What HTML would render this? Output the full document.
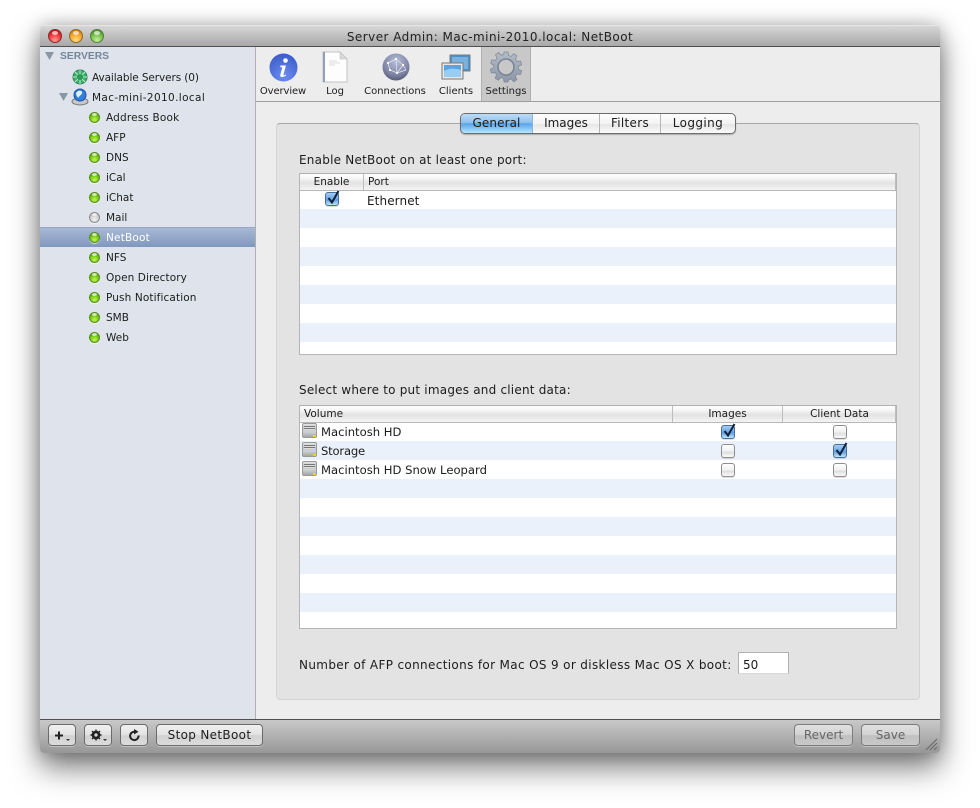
<!DOCTYPE html>
<html><head><meta charset="utf-8"><style>
html,body{margin:0;padding:0;width:980px;height:808px;background:#fff;overflow:hidden}
*{box-sizing:border-box}
div,span,svg{position:absolute}
body{font-family:"DejaVu Sans","Liberation Sans",sans-serif;color:#1c1c1c}
.t{white-space:nowrap;font-size:10.5px;line-height:14px;height:14px}
.m{white-space:nowrap;font-size:12px;line-height:16px;height:16px}
.c{text-align:center}
.led{width:11px;height:11px;left:89px;border-radius:50%;border:1px solid #5d8a22;background:radial-gradient(circle at 50% 75%,#c4f55a 0,#7ed016 45%,#4a9a08 85%);box-shadow:0 1px 0 rgba(255,255,255,.6)}
.led:after{content:"";position:absolute;left:2px;top:0;width:5px;height:3px;border-radius:50%;background:rgba(255,255,255,.7)}
.led.off{border-color:#8a8a8a;background:radial-gradient(circle at 50% 72%,#f2f2f2 0,#d2d2d2 50%,#a8a8a8 90%)}
.tl{width:14px;height:14px;top:29px;border-radius:50%}
.tl:after{content:"";position:absolute;left:3px;top:1px;width:6px;height:4px;border-radius:50%;background:rgba(255,255,255,.65)}
.tbl{border:1px solid #b4b4b4;border-top-color:#b0b0b0;background:repeating-linear-gradient(#ebf1fb -3px,#ebf1fb 16px,#fff 16px,#fff 35px)}
.hd{left:0;top:0;right:0;height:17px;background:linear-gradient(#fff 0,#f4f4f4 30%,#e2e2e2 55%,#f4f4f4 100%);border-bottom:1px solid #b8b8b8}
.sep{top:0;width:1px;height:16px;background:#bdbdbd}
.cb{width:14px;height:14px;border-radius:3px;border:1px solid #8d8d8d;background:linear-gradient(#fff,#f0f0f0 50%,#dedede 60%,#fafafa);box-shadow:0 1px 0 rgba(0,0,0,.12)}
.cb.on{border-color:#4a6f9f;background:linear-gradient(#a5cdf2,#6fa8e4 50%,#5d9be0 55%,#bfe6fb)}
.ck{overflow:visible;left:0;top:-3px}
.btn{height:22px;top:724px;border-radius:4px;border:1px solid #6a6a6a;background:linear-gradient(#f0f0f0,#e2e2e2 50%,#d2d2d2 52%,#dcdcdc);box-shadow:0 1px 0 rgba(255,255,255,.35);font-size:12px;line-height:20px;text-align:center;white-space:nowrap}
.btn.d{color:#666;border-color:#7c7c7c;background:linear-gradient(#e0e0e0,#d2d2d2 50%,#c0c0c0 52%,#c8c8c8)}
.tab{top:114px;height:19px;font-size:12px;line-height:18px;text-align:center;border-right:1px solid #b5b5b5}
.disk{width:15px;height:15px;left:2px;border-radius:2px;border:1px solid #9a9a9a;background:linear-gradient(#e2e5e5,#bfc3c3 35%,#cfd2d2 60%,#a3a8a4)}
.disk:before{content:"";position:absolute;left:1px;top:2px;width:11px;height:4px;background:repeating-linear-gradient(#777 0,#777 1px,#ddd 1px,#ddd 2px)}
.disk:after{content:"";position:absolute;right:0;bottom:0;width:3px;height:2px;background:#e8d820}
.vol{font-size:11.6px}
</style></head><body>

<div style="left:40px;top:25px;width:900px;height:728px;border-radius:5px 5px 4px 4px;background:#ededed;box-shadow:0 15px 30px rgba(0,0,0,.5),0 0 18px rgba(0,0,0,.25);overflow:hidden">
  <div style="left:0;top:0;width:900px;height:22px;background:linear-gradient(#d6d6d6,#a8a8a8);border-bottom:1px solid #505050;border-top:1px solid #e6e6e6"></div>
  <div style="left:0;top:22px;width:216px;height:672px;background:#dfe4ec;border-right:1px solid #b0b0b0"></div>
  <div style="left:0;top:202px;width:215px;height:20px;background:linear-gradient(#a8b9d5,#8097be);border-top:1px solid #97a9c6"></div>
  <div style="left:216px;top:76px;width:684px;height:1px;background:#9e9e9e"></div>
  <div style="left:441px;top:22px;width:50px;height:54px;background:#c8c8c8;border-left:1px solid #b0b0b0;border-right:1px solid #b0b0b0"></div>
  <div style="left:0;top:694px;width:900px;height:34px;background:linear-gradient(#c9c9c9,#979797);border-top:1px solid #4f4f4f"></div>
</div>

<div class="tl" style="left:48px;background:radial-gradient(circle at 50% 85%,#ff9a9a 0,#ee3a3a 50%,#b01010 92%);border:1px solid #8a2a2a"></div>
<div class="tl" style="left:69px;background:radial-gradient(circle at 50% 85%,#ffe080 0,#f6a530 50%,#c47410 92%);border:1px solid #8f6a2a"></div>
<div class="tl" style="left:90px;background:radial-gradient(circle at 50% 85%,#c8f0a0 0,#78c04a 50%,#3f8a20 92%);border:1px solid #54803a"></div>
<div class="m" style="left:0;top:29px;width:980px;text-align:center;font-size:12px;color:#222;letter-spacing:.46px">Server Admin: Mac-mini-2010.local: NetBoot</div>

<svg style="left:45px;top:52px" width="9" height="8"><path d="M0 0H9L4.5 8Z" fill="#8b96a5"/></svg>
<div class="t" style="left:60px;top:50px;font:bold 10.3px/14px 'Liberation Sans',sans-serif;color:#74859a">SERVERS</div>
<svg style="left:72px;top:69px" width="16" height="16" viewBox="0 0 16 16"><circle cx="8" cy="8" r="7" fill="#3fae6e" stroke="#2f7f55"/><path d="M8 1V15M1 8H15M3 3L13 13M13 3L3 13" stroke="#b8ecc8" stroke-width="1"/><circle cx="8" cy="8" r="3" fill="#2c9a58"/></svg>
<div class="t" style="left:92px;top:71px;letter-spacing:-.1px">Available Servers (0)</div>
<svg style="left:59px;top:93px" width="9" height="8"><path d="M0 0H9L4.5 8Z" fill="#8b96a5"/></svg>
<svg style="left:71px;top:88px" width="18" height="18" viewBox="0 0 18 18"><ellipse cx="9" cy="13.5" rx="8" ry="3.5" fill="#c8c8c8" stroke="#777"/><circle cx="9" cy="7" r="6" fill="#2f7fe0" stroke="#1d4f9a"/><path d="M5 5c2-3 5-3 6-1s-2 3-3 5-3-2-3-4z" fill="#dff0ff"/></svg>
<div class="t" style="left:92px;top:91px;letter-spacing:.37px">Mac-mini-2010.local</div>

<div class="led" style="top:112px"></div><div class="t" style="left:106px;top:111px;letter-spacing:.17px">Address Book</div>
<div class="led" style="top:132px"></div><div class="t" style="left:106px;top:131px">AFP</div>
<div class="led" style="top:152px"></div><div class="t" style="left:106px;top:151px">DNS</div>
<div class="led" style="top:172px"></div><div class="t" style="left:106px;top:171px">iCal</div>
<div class="led" style="top:192px"></div><div class="t" style="left:106px;top:191px">iChat</div>
<div class="led off" style="top:212px"></div><div class="t" style="left:106px;top:211px">Mail</div>
<div class="led" style="top:232px"></div><div class="t" style="left:106px;top:231px;color:#fff;letter-spacing:.2px">NetBoot</div>
<div class="led" style="top:252px"></div><div class="t" style="left:106px;top:251px">NFS</div>
<div class="led" style="top:272px"></div><div class="t" style="left:106px;top:271px;letter-spacing:.08px">Open Directory</div>
<div class="led" style="top:292px"></div><div class="t" style="left:106px;top:291px;letter-spacing:.12px">Push Notification</div>
<div class="led" style="top:312px"></div><div class="t" style="left:106px;top:311px">SMB</div>
<div class="led" style="top:332px"></div><div class="t" style="left:106px;top:331px">Web</div>

<!-- toolbar -->
<svg style="left:269px;top:53px" width="29" height="29" viewBox="0 0 29 29"><defs><radialGradient id="b" cx=".5" cy=".8" r=".8"><stop offset="0" stop-color="#6d8df0"/><stop offset="1" stop-color="#3a5cc8"/></radialGradient></defs><circle cx="14.5" cy="14.5" r="14" fill="url(#b)"/><circle cx="16.5" cy="7.5" r="2.3" fill="#fff"/><path d="M11.5 12.5H17L14.5 21.5C14.3 22.6 15.2 22.6 16.8 21.4L17 22.4C15 24.3 10.6 25 11.3 22L13.3 14.2H11.2Z" fill="#fff"/></svg>
<svg style="left:322px;top:51px" width="26" height="32" viewBox="0 0 26 32"><path d="M1 1H18L25 8V31H1Z" fill="#fdfdfd" stroke="#c4c4c4"/><path d="M1 1H3V31H1Z" fill="#8fa0b8"/><path d="M18 1V8H25Z" fill="#d8d8d8" stroke="#bbb" stroke-width=".5"/><path d="M7 10H15M7 12H18M7 14H13" stroke="#ddd"/></svg>
<svg style="left:382px;top:53px" width="28" height="28" viewBox="0 0 28 28"><defs><radialGradient id="g" cx=".5" cy=".3" r=".8"><stop offset="0" stop-color="#b8bfd8"/><stop offset=".65" stop-color="#7a80a0"/><stop offset="1" stop-color="#45485a"/></radialGradient></defs><circle cx="14" cy="14" r="13.5" fill="url(#g)"/><path d="M6 10L14 6L21 12L15 20L8 17ZM14 6L15 20M21 12L24 17L15 20M6 10L8 17" stroke="#e6e9f4" stroke-width=".7" fill="none"/><g fill="#fff"><circle cx="6" cy="10" r="1.1"/><circle cx="14" cy="6" r="1.1"/><circle cx="21" cy="12" r="1.1"/><circle cx="15" cy="20" r="1.1"/><circle cx="8" cy="17" r="1.1"/></g></svg>
<svg style="left:441px;top:54px" width="30" height="27" viewBox="0 0 30 27"><rect x="9" y="1" width="20" height="16" fill="#4d90c8" stroke="#7a7a7a"/><rect x="11" y="3" width="16" height="12" fill="#79b2de"/><rect x="1" y="9" width="21" height="16" fill="#e8e8e8" stroke="#777"/><rect x="3" y="11" width="17" height="12" fill="#5ba3e0"/><path d="M3 17c5-3 11-3 17-1v7H3z" fill="#9accf0"/></svg>
<svg style="left:490px;top:51px" width="32" height="32" viewBox="0 0 32 32"><defs><linearGradient id="gg" x1="0" y1="0" x2="0" y2="1"><stop offset="0" stop-color="#b4bcc8"/><stop offset="1" stop-color="#8c96a8"/></linearGradient></defs><path fill="url(#gg)" stroke="#7d8696" stroke-width=".7" d="M14 1h4l.6 3.6 2.6.8 2.5-2.7 3.2 2.2-1.5 3.3 1.6 2.2 3.6-.4 1.1 3.8-3.3 1.6v2.8l3.3 1.5-1.1 3.8-3.6-.4-1.6 2.2 1.5 3.3-3.2 2.2-2.5-2.7-2.6.8L18 31h-4l-.6-3.6-2.6-.8-2.5 2.7-3.2-2.2 1.5-3.3-1.6-2.2-3.6.4-1.1-3.8 3.3-1.5v-2.8L.7 12.7l1.1-3.8 3.6.4L7 7.1 5.5 3.8l3.2-2.2 2.5 2.7 2.6-.8Z"/><circle cx="16" cy="16" r="8" fill="#c8c8c8" stroke="#7a8494" stroke-width="1.6"/></svg>
<div class="t c" style="left:255px;top:85px;width:56px;font-size:10px;letter-spacing:-.1px">Overview</div>
<div class="t c" style="left:315px;top:85px;width:40px;font-size:10px">Log</div>
<div class="t c" style="left:360px;top:85px;width:70px;font-size:10px">Connections</div>
<div class="t c" style="left:431px;top:85px;width:50px;font-size:10px">Clients</div>
<div class="t c" style="left:481px;top:85px;width:50px;font-size:10px">Settings</div>

<!-- panel -->
<div style="left:276px;top:123px;width:644px;height:577px;background:#e3e3e3;border:1px solid #d4d4d4;border-top:1px solid #a8a8a8;border-radius:4px"></div>
<div style="left:460px;top:113px;width:276px;height:21px;border-radius:5px;border:1px solid #6c6c6c;background:linear-gradient(#fefefe,#f3f3f3 50%,#e6e6e6 55%,#fbfbfb);box-shadow:0 1px 1px rgba(0,0,0,.25)"></div>
<div style="left:461px;top:114px;width:71px;height:19px;border-radius:4px 0 0 4px;background:linear-gradient(#bcdcf7,#8fc1ee 45%,#5aa4ea 52%,#b6e6ff)"></div>
<div class="tab" style="left:461px;width:72px;border-right-color:#8fb3d6;letter-spacing:.1px">General</div>
<div class="tab" style="left:533px;width:67px">Images</div>
<div class="tab" style="left:600px;width:61px;letter-spacing:.3px">Filters</div>
<div class="tab" style="left:661px;width:74px;border:0;letter-spacing:.4px">Logging</div>

<div class="m" style="left:299px;top:152px;letter-spacing:.23px">Enable NetBoot on at least one port:</div>
<div class="tbl" style="left:299px;top:173px;width:598px;height:182px">
  <div style="left:0;top:0;width:596px;height:35px;background:#fff"></div>
  <div class="hd"></div><div class="sep" style="left:63px"></div><div class="sep" style="right:0"></div>
  <div class="t c" style="left:0;top:1px;width:63px">Enable</div>
  <div class="t" style="left:68px;top:1px">Port</div>
  <div class="cb on" style="left:25px;top:18px"><svg class="ck" width="14" height="16" viewBox="0 0 14 16"><path d="M2.5 8L6 12.5L12.5 1" fill="none" stroke="#10203a" stroke-width="2"/></svg></div>
  <div class="m" style="left:67px;top:19px;letter-spacing:.1px">Ethernet</div>
</div>

<div class="m" style="left:299px;top:382px;letter-spacing:.21px">Select where to put images and client data:</div>
<div class="tbl" style="left:299px;top:405px;width:598px;height:224px">
  <div style="left:0;top:0;width:596px;height:35px;background:#fff"></div>
  <div class="hd"></div><div class="sep" style="left:372px"></div><div class="sep" style="left:482px"></div><div class="sep" style="right:0"></div>
  <div class="t" style="left:4px;top:1px">Volume</div>
  <div class="t c" style="left:373px;top:1px;width:109px">Images</div>
  <div class="t c" style="left:483px;top:1px;width:113px">Client Data</div>
  <div class="disk" style="top:17px"></div><div class="m vol" style="left:21px;top:18px">Macintosh HD</div>
  <div class="disk" style="top:36px"></div><div class="m vol" style="left:21px;top:37px;letter-spacing:-.2px">Storage</div>
  <div class="disk" style="top:55px"></div><div class="m vol" style="left:21px;top:56px">Macintosh HD Snow Leopard</div>
  <div class="cb on" style="left:421px;top:19px"><svg class="ck" width="14" height="16" viewBox="0 0 14 16"><path d="M2.5 8L6 12.5L12.5 1" fill="none" stroke="#10203a" stroke-width="2"/></svg></div>
  <div class="cb" style="left:533px;top:19px"></div>
  <div class="cb" style="left:421px;top:38px"></div>
  <div class="cb on" style="left:533px;top:38px"><svg class="ck" width="14" height="16" viewBox="0 0 14 16"><path d="M2.5 8L6 12.5L12.5 1" fill="none" stroke="#10203a" stroke-width="2"/></svg></div>
  <div class="cb" style="left:421px;top:57px"></div>
  <div class="cb" style="left:533px;top:57px"></div>
</div>

<div class="m" style="left:299px;top:657px;letter-spacing:.35px">Number of AFP connections for Mac OS 9 or diskless Mac OS X boot:</div>
<div style="left:738px;top:652px;width:51px;height:22px;background:#fff;border:1px solid #b0b0b0;border-bottom-color:#d8d8d8"></div>
<div class="m" style="left:743px;top:657px">50</div>

<!-- bottom -->
<div class="btn" style="left:48px;width:28px"><svg style="left:6px;top:5px" width="16" height="12" viewBox="0 0 16 12"><path d="M4 1.5V9.5M0 5.5H8" stroke="#222" stroke-width="2"/><path d="M11 9H15L13 11Z" fill="#333"/></svg></div>
<div class="btn" style="left:84px;width:28px"><svg style="left:5px;top:4px" width="18" height="13" viewBox="0 0 18 13"><circle cx="6" cy="6" r="3.2" fill="none" stroke="#222" stroke-width="2.4"/><path d="M6 .5V11.5M.5 6H11.5M2 2L10 10M10 2L2 10" stroke="#222" stroke-width="1.4"/><circle cx="6" cy="6" r="1.6" fill="#ddd"/><path d="M13 10H17L15 12Z" fill="#333"/></svg></div>
<div class="btn" style="left:120px;width:28px"><svg style="left:7px;top:4px" width="13" height="13" viewBox="0 0 13 13"><path d="M10.5 6.5A4.2 4.2 0 1 1 6.5 2.7" fill="none" stroke="#222" stroke-width="2"/><path d="M6 0L10.5 2.8L6 5.5Z" fill="#222"/></svg></div>
<div class="btn" style="left:156px;width:107px;letter-spacing:.33px">Stop NetBoot</div>
<div class="btn d" style="left:794px;width:59px">Revert</div>
<div class="btn d" style="left:861px;width:59px">Save</div>
<svg style="left:925px;top:738px" width="13" height="13" viewBox="0 0 13 13"><path d="M1 12L12 1M5 12L12 5M9 12L12 9" stroke="#666" stroke-width="1"/></svg>

</body></html>
